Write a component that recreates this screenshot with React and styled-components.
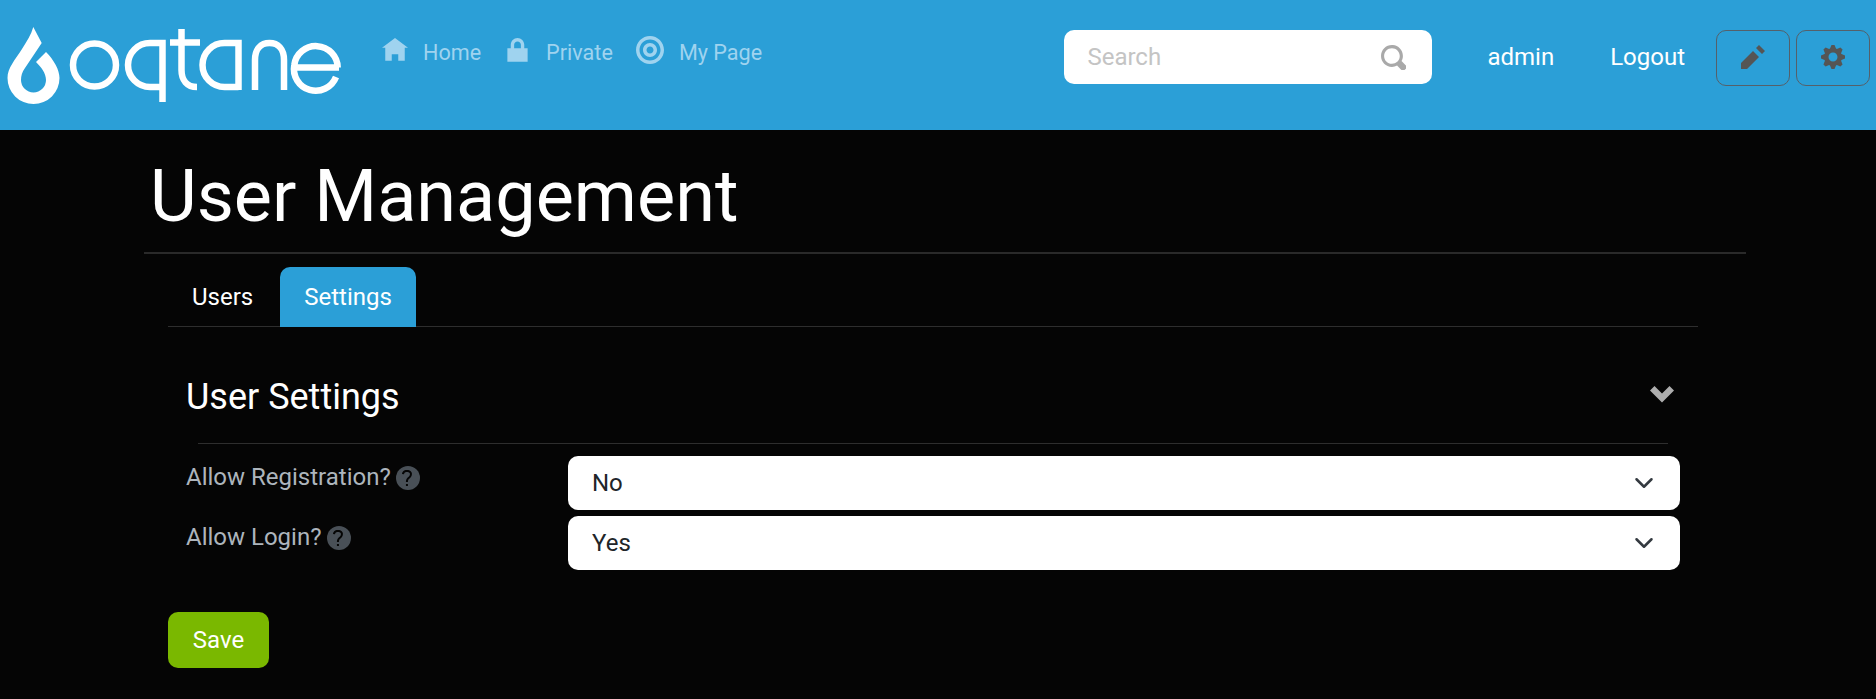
import React from "react";
import styled, { createGlobalStyle } from "styled-components";

const GlobalStyle = createGlobalStyle`
    html, body {
        margin: 0;
        padding: 0;
        background: #050505;
        font-family: Roboto, "Liberation Sans", sans-serif;
    }
`;

const Page = styled.div`
    min-height: 699px;
    background: #050505;
    color: #ffffff;
`;

const Header = styled.header`
    height: 130px;
    box-sizing: border-box;
    background: #2b9fd7;
    display: flex;
    align-items: flex-start;
`;

const LogoMark = styled.svg`
    width: 350px;
    height: 130px;
    flex: none;
`;

const Nav = styled.nav`
    display: flex;
    margin-left: 32px;
    padding-top: 38px;
    gap: 23px;
`;

const NavItem = styled.a`
    display: flex;
    align-items: flex-start;
    gap: 15px;
    font-size: 21.6px;
    line-height: 30px;
    color: #9fd3ef;
`;

const NavIcon = styled.svg`
    width: ${(p) => p.$size}px;
    height: ${(p) => p.$size}px;
    margin-top: ${(p) => p.$top || 0}px;
    fill: #9fd3ef;
    flex: none;
`;

const RightSide = styled.div`
    margin-left: auto;
    padding: 30px 6px 0 0;
    display: flex;
    align-items: flex-start;
`;

const SearchBox = styled.div`
    width: 368px;
    height: 54px;
    box-sizing: border-box;
    padding: 0 26px 0 23px;
    background: #ffffff;
    border-radius: 10px;
    display: flex;
    align-items: center;
`;

const SearchInput = styled.input`
    flex: 1;
    min-width: 0;
    border: 0;
    outline: 0;
    background: transparent;
    font-family: inherit;
    font-size: 24px;
    padding: 0;
    &::placeholder {
        color: #c4c4c4;
    }
`;

const SearchIcon = styled.svg`
    width: 25px;
    height: 25px;
    fill: #a9a9a9;
`;

const UserLink = styled.a`
    height: 54px;
    display: flex;
    align-items: center;
    font-size: 24px;
    color: #ffffff;
    margin-left: ${(p) => p.$left}px;
`;

const ControlButton = styled.button`
    width: 74px;
    height: 56px;
    margin-left: ${(p) => p.$left}px;
    background: transparent;
    border: 1px solid #55606a;
    border-radius: 10px;
    display: flex;
    align-items: center;
    justify-content: center;
    padding: 0 0 3px;
`;

const ControlIcon = styled.svg`
    width: 24px;
    height: 24px;
    fill: #555555;
`;

const Main = styled.main`
    margin-left: 144px;
    width: 1602px;
`;

const Title = styled.h1`
    margin: 0;
    padding: 11px 0 0 6px;
    height: 124px;
    box-sizing: border-box;
    border-bottom: 2px solid #2a2a2a;
    font-size: 72px;
    font-weight: 400;
    line-height: 112px;
`;

const Content = styled.div`
    margin: 0 48px 0 24px;
`;

const Tabs = styled.div`
    display: flex;
    align-items: flex-end;
    gap: 3px;
    height: 73px;
    box-sizing: border-box;
    border-bottom: 1px solid #2e2e2e;
`;

const Tab = styled.a`
    height: 60px;
    box-sizing: border-box;
    padding: 0 24px 1px;
    margin-bottom: -1px;
    display: flex;
    align-items: center;
    font-size: 24px;
    color: #ffffff;
    border-radius: 10px 10px 0 0;
    background: ${(p) => (p.$active ? "#2b9fd7" : "transparent")};
`;

const SectionHeader = styled.div`
    height: 116px;
    box-sizing: border-box;
    margin-right: 24px;
    padding: 23px 0 0 18px;
    display: flex;
    align-items: center;
    justify-content: space-between;
`;

const SectionTitle = styled.h5`
    margin: 0;
    font-size: 36px;
    font-weight: 400;
`;

const CollapseIcon = styled.svg`
    width: 24px;
    height: 24px;
    fill: #aeaeae;
    margin-bottom: 3px;
`;

const Divider = styled.hr`
    margin: 0 30px 0 30px;
    border: 0;
    border-top: 1px solid #2e2e2e;
`;

const Form = styled.div`
    padding: 12px 18px 0;
    display: flex;
    flex-direction: column;
    gap: 6px;
`;

const Row = styled.div`
    display: grid;
    grid-template-columns: 382px 1112px;
`;

const Label = styled.label`
    display: flex;
    align-items: flex-start;
    gap: 5px;
    font-size: 24px;
    line-height: 44px;
    height: 54px;
    margin-top: -1px;
    color: #adb5bd;
`;

const HelpBadge = styled.span`
    width: 24px;
    height: 24px;
    margin-top: 11px;
    border-radius: 50%;
    background: #495057;
    display: flex;
    align-items: center;
    justify-content: center;
`;

const HelpIcon = styled.svg`
    width: 16px;
    height: 16px;
    fill: #050505;
`;

const Select = styled.select`
    height: 54px;
    box-sizing: border-box;
    border: 0;
    border-radius: 10px;
    padding: 0 24px;
    appearance: none;
    font-family: inherit;
    font-size: 24px;
    color: #212529;
    background-color: #ffffff;
    background-image: url("data:image/svg+xml,%3csvg xmlns='http://www.w3.org/2000/svg' viewBox='0 0 16 16'%3e%3cpath fill='none' stroke='%23343a40' stroke-linecap='round' stroke-linejoin='round' stroke-width='2' d='m2 5 6 6 6-6'/%3e%3c/svg%3e");
    background-repeat: no-repeat;
    background-position: right 26px center;
    background-size: 20px 20px;
`;

const SaveButton = styled.button`
    margin-top: 42px;
    width: 101px;
    height: 56px;
    border: 0;
    border-radius: 10px;
    background: #7ab800;
    color: #ffffff;
    font-family: inherit;
    font-size: 24px;
`;

const icons = {
    home: "M4 0l-4 3h1v4h2v-2h2v2h2v-4.03l1 .03-4-3z",
    lock: "M4 0c-1.1 0-2 .9-2 2v1h-1v4h6v-4h-1v-1c0-1.1-.9-2-2-2zm0 1c.56 0 1 .44 1 1v1h-2v-1c0-.56.44-1 1-1z",
    target: "M4 0c-2.2 0-4 1.8-4 4s1.8 4 4 4 4-1.8 4-4-1.8-4-4-4zm0 1c1.66 0 3 1.34 3 3s-1.34 3-3 3-3-1.34-3-3 1.34-3 3-3zm0 1c-1.1 0-2 .9-2 2s.9 2 2 2 2-.9 2-2-.9-2-2-2zm0 1c.56 0 1 .44 1 1s-.44 1-1 1-1-.44-1-1 .44-1 1-1z",
    pencil: "M6 0l-1 1 2 2 1-1-2-2zm-2 2l-4 4v2h2l4-4-2-2z",
    cog: "M3.5 0l-.5 1.19c-.1.03-.19.08-.28.13l-1.19-.5-.72.72.5 1.19c-.05.1-.09.18-.13.28l-1.19.5v1l1.19.5c.04.1.08.18.13.28l-.5 1.19.72.72 1.19-.5c.09.04.18.09.28.13l.5 1.19h1l.5-1.19c.09-.04.19-.08.28-.13l1.19.5.72-.72-.5-1.19c.04-.09.09-.19.13-.28l1.19-.5v-1l-1.19-.5c-.03-.09-.08-.19-.13-.28l.5-1.19-.72-.72-1.19.5c-.09-.04-.19-.09-.28-.13l-.5-1.19h-1zm.5 2.5c.83 0 1.5.67 1.5 1.5s-.67 1.5-1.5 1.5-1.5-.67-1.5-1.5.67-1.5 1.5-1.5z",
    search: "M3.5 0c-1.93 0-3.5 1.57-3.5 3.5s1.57 3.5 3.5 3.5c.59 0 1.17-.14 1.66-.41a1 1 0 0 0 .13.13l1 1a1.02 1.02 0 1 0 1.44-1.44l-1-1a1 1 0 0 0-.16-.13c.27-.49.44-1.06.44-1.66 0-1.93-1.57-3.5-3.5-3.5zm0 1c1.39 0 2.5 1.11 2.5 2.5 0 .66-.24 1.27-.66 1.72-.01.01-.02.02-.03.03a1 1 0 0 0-.13.13c-.44.4-1.04.63-1.69.63-1.39 0-2.5-1.11-2.5-2.5s1.11-2.5 2.5-2.5z",
    question: "M3.47 0c-.85 0-1.48.26-1.88.66-.4.4-.54.9-.59 1.28l1 .13c.04-.25.12-.5.31-.69.19-.19.49-.38 1.16-.38.66 0 1.02.16 1.22.34.2.18.28.4.28.66 0 .83-.34 1.06-.84 1.5-.5.44-1.16 1.08-1.16 2.25v.25h1v-.25c0-.83.31-1.06.81-1.5.5-.44 1.19-1.08 1.19-2.25 0-.48-.17-1.02-.59-1.41-.43-.39-1.07-.59-1.91-.59zm-.5 7v1h1v-1h-1z",
    chevron: "M1.5 1l-1.5 1.5 4 4 4-4-1.5-1.5-2.5 2.5-2.5-2.5z",
};

const Logo = () => (
    <LogoMark viewBox="0 0 350 130" role="img" aria-label="oqtane">
        <path
            fill="#ffffff"
            d="M33.3 27 L41.7 43 L25 68 C22 72 21 76 21 80 A12.5 12.5 0 0 0 46 80 C46 73 41 67 36 62 L46 52 C54 60 59.5 70 59.5 78 A26 26 0 0 1 7.5 78 C7.5 68 15 60 22 49 C27 41 31 35 33.3 27 Z"
        />
        <g fill="none" stroke="#ffffff" strokeWidth="6.5">
            <circle cx="94.5" cy="65" r="21.5" />
            <path d="M162.5 102 V43 H150 A22 22 0 0 0 150 87 H162.5" />
            <path d="M181.5 29 V70 C181.5 80 187 87 197 87 M170 42.5 H200" />
            <path d="M238.5 90 V43 H224.5 A22 22 0 0 0 224.5 87 H238.5" />
            <path d="M255 90 V60 C255 49 261 43 269.5 43 C278 43 284 49 284 60 V90" />
            <path d="M339 67.5 H294.3 M294.3 65 A21.8 21.8 0 0 1 337.7 67.5 M294.3 65 A21.8 21.8 0 0 0 336 77" />
        </g>
    </LogoMark>
);

const App = () => (
    <Page>
        <GlobalStyle />
        <Header>
            <Logo />
            <Nav>
                <NavItem>
                    <NavIcon $size={26} viewBox="0 0 8 8"><path d={icons.home} /></NavIcon>
                    Home
                </NavItem>
                <NavItem>
                    <NavIcon $size={27} viewBox="0 0 8 8"><path d={icons.lock} /></NavIcon>
                    Private
                </NavItem>
                <NavItem>
                    <NavIcon $size={28} $top={-2} viewBox="0 0 8 8"><path d={icons.target} /></NavIcon>
                    My Page
                </NavItem>
            </Nav>
            <RightSide>
                <SearchBox>
                    <SearchInput placeholder="Search" />
                    <SearchIcon viewBox="0 0 8 8"><path d={icons.search} /></SearchIcon>
                </SearchBox>
                <UserLink $left={55}>admin</UserLink>
                <UserLink $left={56}>Logout</UserLink>
                <ControlButton $left={31}>
                    <ControlIcon viewBox="0 0 8 8"><path d={icons.pencil} /></ControlIcon>
                </ControlButton>
                <ControlButton $left={6}>
                    <ControlIcon viewBox="0 0 8 8"><path d={icons.cog} /></ControlIcon>
                </ControlButton>
            </RightSide>
        </Header>
        <Main>
            <Title>User Management</Title>
            <Content>
                <Tabs>
                    <Tab>Users</Tab>
                    <Tab $active>Settings</Tab>
                </Tabs>
                <SectionHeader>
                    <SectionTitle>User Settings</SectionTitle>
                    <CollapseIcon viewBox="0 0 8 8"><path d={icons.chevron} /></CollapseIcon>
                </SectionHeader>
                <Divider />
                <Form>
                    <Row>
                        <Label>
                            Allow Registration?
                            <HelpBadge><HelpIcon viewBox="0 0 8 8"><path d={icons.question} /></HelpIcon></HelpBadge>
                        </Label>
                        <Select defaultValue="No">
                            <option>No</option>
                            <option>Yes</option>
                        </Select>
                    </Row>
                    <Row>
                        <Label>
                            Allow Login?
                            <HelpBadge><HelpIcon viewBox="0 0 8 8"><path d={icons.question} /></HelpIcon></HelpBadge>
                        </Label>
                        <Select defaultValue="Yes">
                            <option>No</option>
                            <option>Yes</option>
                        </Select>
                    </Row>
                </Form>
                <SaveButton>Save</SaveButton>
            </Content>
        </Main>
    </Page>
);

export default App;
